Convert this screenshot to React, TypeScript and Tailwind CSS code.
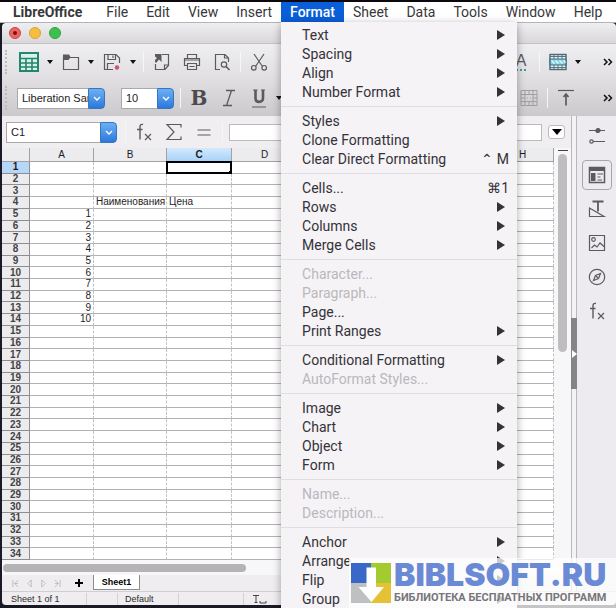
import type { ReactNode } from 'react';

interface MenuEntry {
  label: string;
  submenu?: boolean;
  disabled?: boolean;
  shortcut?: string;
}

const MENUS = ['File', 'Edit', 'View', 'Insert', 'Format', 'Sheet', 'Data', 'Tools', 'Window', 'Help'];

/** Entries of the Format menu, one array per separated group. */
const FORMAT_GROUPS: MenuEntry[][] = [
  [
    { label: 'Text', submenu: true },
    { label: 'Spacing', submenu: true },
    { label: 'Align', submenu: true },
    { label: 'Number Format', submenu: true },
  ],
  [
    { label: 'Styles', submenu: true },
    { label: 'Clone Formatting' },
    { label: 'Clear Direct Formatting', shortcut: '⌃ M' },
  ],
  [
    { label: 'Cells...', shortcut: '⌘1' },
    { label: 'Rows', submenu: true },
    { label: 'Columns', submenu: true },
    { label: 'Merge Cells', submenu: true },
  ],
  [
    { label: 'Character...', disabled: true },
    { label: 'Paragraph...', disabled: true },
    { label: 'Page...' },
    { label: 'Print Ranges', submenu: true },
  ],
  [
    { label: 'Conditional Formatting', submenu: true },
    { label: 'AutoFormat Styles...', disabled: true },
  ],
  [
    { label: 'Image', submenu: true },
    { label: 'Chart', submenu: true },
    { label: 'Object', submenu: true },
    { label: 'Form', submenu: true },
  ],
  [
    { label: 'Name...', disabled: true },
    { label: 'Description...', disabled: true },
  ],
  [
    { label: 'Anchor', submenu: true },
    { label: 'Arrange', submenu: true },
    { label: 'Flip', submenu: true },
    { label: 'Group', submenu: true },
  ],
];

const COLUMNS = [
  { name: 'A', width: 'w-16' },
  { name: 'B', width: 'w-[73px]' },
  { name: 'C', width: 'w-[65px]' },
  { name: 'D', width: 'w-[66px]' },
  { name: 'E', width: 'w-[65px]' },
  { name: 'F', width: 'w-16' },
  { name: 'G', width: 'w-[65px]' },
  { name: 'H', width: 'w-[62px]' },
];

const ROWS = Array.from({ length: 34 }, (_, i) => i + 1);

function cellValue(column: string, row: number): string {
  if (column === 'A' && row >= 5 && row <= 14) return String(row - 4);
  if (column === 'B' && row === 4) return 'Наименования';
  if (column === 'C' && row === 4) return 'Цена';
  return '';
}

/* ---------- icons ---------- */

function Icon({ children, className = 'size-5' }: { children: ReactNode; className?: string }) {
  return (
    <svg viewBox="0 0 20 20" fill="none" stroke="#5c5a5e" strokeWidth="1.2" className={className} aria-hidden="true">
      {children}
    </svg>
  );
}

const SpreadsheetIcon = () => (
  <Icon>
    <rect x="1" y="1" width="18" height="18" fill="#d9f3ea" stroke="#23866d" strokeWidth="2" />
    <path d="M1 6.5h18M7 6.5V19M13 6.5V19M1 11h18M1 15h18" stroke="#23866d" strokeWidth="1.6" />
  </Icon>
);

const FolderIcon = () => (
  <Icon>
    <path d="M2.5 5.5h15v12h-15z" />
    <path d="M2 8V2.5h6L9.5 5h8v1H9L7.5 8z" fill="#5c5a5e" stroke="none" />
  </Icon>
);

const SaveIcon = () => (
  <Icon>
    <path d="M11 17.5H2.5v-15H14L17.5 6v5" />
    <path d="M6 2.5V7.5h7.5v-5M11 3.5v2.5M5.5 17.5v-6H12" />
    <circle cx="15" cy="15.5" r="2.2" fill="#c9566d" stroke="none" />
  </Icon>
);

const ExportIcon = () => (
  <Icon>
    <path d="M10 2.5h6.5v11l-3.5 4H3.5V12M12.5 17v-4h4" />
    <path d="M3 2h6.5v8L7 7.5 4.5 10.5H3V8l2-2-2-1.5z" fill="#5c5a5e" stroke="none" />
  </Icon>
);

const PrintIcon = () => (
  <Icon>
    <path d="M5.5 6.5V2.5h9v4M5.5 13.5h-3v-7h15v7h-3" />
    <path d="M3 8h14M5 11.5h10M5.5 12v5.5h9V12M7.5 14.5h5" />
  </Icon>
);

const PreviewIcon = () => (
  <Icon>
    <path d="M8 17.5H3.5v-15H13L16.5 6v4M12.5 2.5V6h4" />
    <circle cx="12" cy="12.5" r="2.7" />
    <path d="m14 14.5 3.5 3.5" strokeWidth="1.6" />
  </Icon>
);

const CutIcon = () => (
  <Icon>
    <path d="m5 2 8.5 12.5M15 2 6.5 14.5" />
    <circle cx="4.8" cy="15.8" r="2.3" />
    <circle cx="15.2" cy="15.8" r="2.3" />
  </Icon>
);

const TableIcon = () => (
  <Icon>
    <rect x="2" y="2.5" width="16" height="15" fill="#eaf2f4" stroke="#4a6a76" strokeWidth="1.4" />
    <path d="M2 7h16v6H2z" fill="#7fd0e4" stroke="#4a6a76" />
    <path d="M6 2v5M6 13v5M10 2v5M10 13v5M14 2v5M14 13v5M2 4.5h16M2 15.5h16" stroke="#4a6a76" strokeWidth="0.9" />
    <path d="m3.5 8.5 3 3m1-3 3 3m1-3 3 3m1-3 2 2" stroke="#eafaff" strokeWidth="1.4" />
  </Icon>
);

const BordersIcon = () => (
  <Icon>
    <path
      d="M2 2.5h16v15H2zM6 2.5v15M10 2.5v4M10 13.5v4M14 2.5v15M2 6.5h16M2 13.5h16M2 10h4M14 10h4M8 10h1M11 10h1"
      stroke="#a19fa3"
      strokeWidth="1"
    />
  </Icon>
);

const AlignTopIcon = () => (
  <Icon>
    <path d="M2 2.5h16" />
    <path d="M10 17.5V6M7.5 9 10 6l2.5 3" strokeWidth="1.7" />
  </Icon>
);

const SumIcon = () => (
  <Icon>
    <path d="M17 5.5V2.5H3l7 7.5-7 7.5h14v-3" />
  </Icon>
);

const EqualsIcon = () => (
  <Icon>
    <path d="M3.5 8h13M3.5 13h13" />
  </Icon>
);

const FunctionIcon = () => (
  <Icon>
    <path d="M9 2.5C6.5 1.8 6 3.5 6 5v12.5M3 7.5h5.5" strokeWidth="1.4" />
    <path d="m11 12 6 6M17 12l-6 6" />
  </Icon>
);

const SettingsIcon = () => (
  <Icon>
    <path d="M2 4.5h16M6 15.5h12" />
    <circle cx="11" cy="4.5" r="2" fill="#5c5a5e" />
    <circle cx="4.5" cy="15.5" r="1.7" />
  </Icon>
);

const PropertiesIcon = () => (
  <Icon>
    <path d="M2.5 2.5h15v15h-15z" strokeWidth="1.5" />
    <path d="M2 2h16v4H2zM4 8h4.5v8H4z" fill="#5c5a5e" stroke="none" />
    <path d="M10.5 9H16M10.5 12h3M10.5 15H15" />
  </Icon>
);

const StylesIcon = () => (
  <Icon>
    <path d="M5.500 2.500h11M11 2.500v10" strokeWidth="1.8" />
    <path d="M2.5 9v8.500H17z" />
  </Icon>
);

const GalleryIcon = () => (
  <Icon>
    <path d="M2.5 2.5h15v15h-15z" />
    <circle cx="6.5" cy="6.5" r="1.8" />
    <path d="m4.5 15 3-3 2.5 2 3-4 4 3.5" />
  </Icon>
);

const NavigatorIcon = () => (
  <Icon>
    <circle cx="10" cy="10" r="7.7" />
    <path d="m13.5 6.5-2 5-5 2 2-5z" />
    <path d="m9 9 2 2" />
  </Icon>
);

function Caret() {
  return (
    <svg viewBox="0 0 6 4" className="h-1 w-1.5 shrink-0" aria-hidden="true">
      <path d="M0 0h6L3 4z" fill="#111" />
    </svg>
  );
}

function MoreIcon() {
  return (
    <svg viewBox="0 0 10 8" className="h-2 w-2.5" fill="none" stroke="#111" strokeWidth="1.5" aria-hidden="true">
      <path d="m1 1 3 3-3 3M5.5 1l3 3-3 3" />
    </svg>
  );
}

/* ---------- controls ---------- */

function ToolButton({ label, children, className = '' }: { label: string; children: ReactNode; className?: string }) {
  return (
    <button type="button" aria-label={label} className={`flex h-6 shrink-0 items-center justify-center ${className}`}>
      {children}
    </button>
  );
}

function Divider() {
  return <span className="h-5 w-px shrink-0 bg-[#f6f5f7]" />;
}

function Grip() {
  return <span className="h-6 w-0 shrink-0 border-l-2 border-dotted border-[#bdbbbe]" />;
}

function ComboBox({ label, value, className }: { label: string; value: string; className: string }) {
  return (
    <div className={`flex h-[21px] shrink-0 ${className}`}>
      <input
        aria-label={label}
        defaultValue={value}
        className="min-w-0 flex-1 border border-r-0 border-[#a9a8ab] bg-white pl-1 text-[11px] text-[#222] outline-none"
      />
      <button
        type="button"
        aria-label={`${label} list`}
        className="flex w-[17px] items-center justify-center rounded-r-[4px] border border-[#3676bd] bg-linear-to-b from-[#6cb0f2] to-[#2b78dd]"
      >
        <svg viewBox="0 0 8 5" className="h-[5px] w-2" fill="none" stroke="#fff" strokeWidth="1.4" aria-hidden="true">
          <path d="m1 1 3 3 3-3" />
        </svg>
      </button>
    </div>
  );
}

function FormatMenu() {
  return (
    <div
      role="menu"
      aria-label="Format"
      className="absolute top-full left-0 z-20 w-[236px] bg-[#f5f3f6] pt-[3px] pb-2 shadow-[0_2px_8px_rgba(0,0,0,0.35)]"
    >
      {FORMAT_GROUPS.map((group, i) => (
        <div key={group[0].label} role="group">
          {i > 0 && <div role="separator" className="mt-[5px] mb-1 h-px bg-[#dfdde1]" />}
          {group.map((entry) => (
            <button
              key={entry.label}
              type="button"
              role="menuitem"
              disabled={entry.disabled}
              className="flex h-[19px] w-full items-center pr-3 pl-[21px] text-left text-[#343236] disabled:text-[#bab8bc]"
            >
              {entry.label}
              {entry.submenu && (
                <svg viewBox="0 0 8 10" className="ml-auto h-2.5 w-2" aria-hidden="true">
                  <path d="M0 0v10l8-5z" fill="#343236" />
                </svg>
              )}
              {entry.shortcut && <span className="ml-auto -mr-1">{entry.shortcut}</span>}
            </button>
          ))}
        </div>
      ))}
    </div>
  );
}

function MenuBar() {
  return (
    <nav className="flex h-[23px] shrink-0 border-t-2 border-b border-t-[#0d0810] border-b-[#b5b3b6] bg-white pl-1 font-[Roboto,sans-serif] text-sm text-[#39373b]">
      <button type="button" className="mr-1.5 px-[9px] font-bold">
        LibreOffice
      </button>
      {MENUS.map((name) => (
        <div key={name} className="relative flex">
          <button
            type="button"
            aria-expanded={name === 'Format'}
            className="px-[9px] aria-expanded:bg-[#0a5ed8] aria-expanded:font-medium aria-expanded:text-white"
          >
            {name}
          </button>
          {name === 'Format' && <FormatMenu />}
        </div>
      ))}
    </nav>
  );
}

function TitleBar() {
  return (
    <div className="flex h-[21px] shrink-0 items-center gap-2 rounded-t border-b border-[#c4c2c5] bg-linear-to-b from-[#efeef0] to-[#d9d7da] pl-[7px]">
      <button
        type="button"
        aria-label="Close"
        className="flex size-3 items-center justify-center rounded-full border border-[#c4474b] bg-[#ee6463]"
      >
        <span className="size-1 rounded-full bg-[#7c1015]" />
      </button>
      <button type="button" aria-label="Minimize" className="size-3 rounded-full border border-[#dba03c] bg-[#f6be3f]" />
      <button type="button" aria-label="Zoom" className="size-3 rounded-full border border-[#33a043] bg-[#3cc24c]" />
    </div>
  );
}

function StandardToolbar() {
  return (
    <div className="flex h-9 shrink-0 items-center bg-linear-to-b from-[#efeef0] to-[#e0dee1] pl-[3px]">
      <Grip />
      <ToolButton label="New" className="ml-3 w-5"><SpreadsheetIcon /></ToolButton>
      <ToolButton label="New options" className="w-[22px]"><Caret /></ToolButton>
      <ToolButton label="Open" className="w-5"><FolderIcon /></ToolButton>
      <ToolButton label="Open recent" className="w-5"><Caret /></ToolButton>
      <ToolButton label="Save" className="w-[22px]"><SaveIcon /></ToolButton>
      <ToolButton label="Save options" className="w-5"><Caret /></ToolButton>
      <Divider />
      <ToolButton label="Export as PDF" className="ml-2 w-5"><ExportIcon /></ToolButton>
      <ToolButton label="Print" className="ml-2.5 w-5"><PrintIcon /></ToolButton>
      <ToolButton label="Print preview" className="ml-2.5 w-5"><PreviewIcon /></ToolButton>
      <span className="w-2" />
      <Divider />
      <ToolButton label="Cut" className="ml-2 w-5"><CutIcon /></ToolButton>
      <ToolButton label="Spelling" className="mr-2.5 ml-auto w-4">
        <span className="border-b-2 border-dotted border-[#3f9aa8] text-base leading-4 text-[#5c5a5e]">A</span>
      </ToolButton>
      <Divider />
      <ToolButton label="Table" className="ml-2 w-5"><TableIcon /></ToolButton>
      <ToolButton label="Table options" className="w-5"><Caret /></ToolButton>
      <ToolButton label="More tools" className="ml-3 w-4"><MoreIcon /></ToolButton>
    </div>
  );
}

function FormattingToolbar() {
  return (
    <div className="flex h-9 shrink-0 items-center bg-linear-to-b from-[#e0dee1] to-[#cbc9cc] pl-[3px]">
      <Grip />
      <ComboBox label="Font name" value="Liberation Sans" className="ml-2.5 w-[88px]" />
      <ComboBox label="Font size" value="10" className="ml-4 w-[53px]" />
      <span className="w-1.5" />
      <Divider />
      <ToolButton label="Bold" className="ml-2 w-5">
        <span className="font-['DejaVu_Serif'] text-xl font-bold text-[#4c4a4e]">B</span>
      </ToolButton>
      <ToolButton label="Italic" className="ml-2.5 w-5">
        <Icon><path d="M7 2.5h9M4 17.5h9M12.5 2.5l-5 15" strokeWidth="1.3" /></Icon>
      </ToolButton>
      <ToolButton label="Underline" className="ml-2.5 w-5">
        <Icon>
          <path d="M6.500 2v8.500c0 4.500 7.500 4.500 7.500 0V2" strokeWidth="2.6" />
          <path d="M4 2h4.500M12 2h4M3 19h14" />
        </Icon>
      </ToolButton>
      <ToolButton label="Underline options" className="w-5"><Caret /></ToolButton>
      <ToolButton label="Borders" className="mr-2 ml-auto w-5"><BordersIcon /></ToolButton>
      <Divider />
      <ToolButton label="Align top" className="ml-2 w-5"><AlignTopIcon /></ToolButton>
      <ToolButton label="More formatting" className="ml-6 w-4"><MoreIcon /></ToolButton>
    </div>
  );
}

function FormulaBar() {
  return (
    <div className="flex h-8 shrink-0 items-center bg-[#f0eef1] pr-1.5 pl-1">
      <ComboBox label="Name box" value="C1" className="w-[111px]" />
      <span className="w-2" />
      <Divider />
      <ToolButton label="Function wizard" className="ml-2 w-5"><FunctionIcon /></ToolButton>
      <ToolButton label="Sum" className="ml-2.5 w-5"><SumIcon /></ToolButton>
      <ToolButton label="Accept" className="ml-2.5 w-5"><EqualsIcon /></ToolButton>
      <span className="w-2" />
      <Divider />
      <input aria-label="Formula" className="ml-1.5 h-[17px] min-w-0 flex-1 border border-[#bcbabd] bg-white" />
      <button
        type="button"
        aria-label="Expand formula bar"
        className="ml-1.5 flex h-3.5 w-[17px] items-center justify-center rounded-[3px] border border-[#bcbabd] bg-white"
      >
        <svg viewBox="0 0 10 6" className="h-1.5 w-2.5" aria-hidden="true">
          <path d="M0 0h10L5 6z" fill="#000" />
        </svg>
      </button>
    </div>
  );
}

function Sheet() {
  return (
    <table className="shrink-0 table-fixed border-separate border-spacing-0 self-stretch text-[10px] leading-[10px] text-[#1d1c1e]">
      <thead>
        <tr className="h-3.5">
          <th className="w-7 border-r border-b border-[#a3a1a4] bg-[#ececee] p-0" />
          {COLUMNS.map(({ name, width }) => (
            <th
              key={name}
              scope="col"
              className={`${width} border-r border-b border-[#a3a1a4] p-0 ${
                name === 'C' ? 'bg-linear-to-b from-[#d3e9fc] to-[#a9d2f8] font-bold' : 'bg-[#ececee] font-normal'
              }`}
            >
              {name}
            </th>
          ))}
        </tr>
      </thead>
      <tbody>
        {ROWS.map((row) => (
          <tr key={row}>
            <th
              scope="row"
              className={`border-r border-b border-[#8f8d90] p-0 font-bold ${row === 1 ? 'bg-[#b5d8f8]' : 'bg-[#ececee] text-[#444246]'}`}
            >
              {row}
            </th>
            {COLUMNS.map(({ name }) => (
              <td
                key={name}
                className={`relative border-r border-b border-r-[#c4c2c5] border-b-[#b3b1b4] [border-right-style:dashed] bg-white p-0 whitespace-nowrap ${
                  name === 'A' ? 'pr-0.5 text-right' : 'pl-0.5'
                }`}
              >
                {cellValue(name, row)}
                {name === 'C' && row === 1 && (
                  <span className="absolute -inset-px border-2 border-black">
                    <span className="absolute -right-[3px] -bottom-[3px] size-1 bg-black" />
                  </span>
                )}
              </td>
            ))}
          </tr>
        ))}
      </tbody>
    </table>
  );
}

function SheetTabs() {
  return (
    <div className="flex h-4 shrink-0 items-start bg-[#efedf0] pl-2.5">
      <div className="flex h-4 items-center gap-[7px]">
        {[
          { label: 'First sheet', d: 'M1 0v8M7 0 3 4l4 4M3 4h4' },
          { label: 'Previous sheet', d: 'M6 0 2 4l4 4z' },
          { label: 'Next sheet', d: 'm2 0 4 4-4 4z' },
          { label: 'Last sheet', d: 'M7 0v8M1 0l4 4-4 4M1 4h4' },
        ].map(({ label, d }) => (
          <button key={label} type="button" aria-label={label}>
            <svg viewBox="0 0 8 8" className="size-[7px]" fill="none" stroke="#b9b7ba" aria-hidden="true">
              <path d={d} />
            </svg>
          </button>
        ))}
      </div>
      <button type="button" aria-label="Add sheet" className="ml-3.5 flex h-4 items-center">
        <svg viewBox="0 0 8 8" className="size-2" stroke="#000" strokeWidth="2" aria-hidden="true">
          <path d="M4 0v8M0 4h8" />
        </svg>
      </button>
      <button
        type="button"
        className="ml-2.5 h-[15px] w-[47px] border border-t-0 border-[#8d8b8e] bg-white text-[9px] leading-[13px] font-bold text-black"
      >
        Sheet1
      </button>
    </div>
  );
}

function StatusBar() {
  return (
    <footer className="flex h-3.5 shrink-0 items-center rounded-b border-t border-[#d0ced1] bg-[#efedf0] pl-[9px] text-[9px] leading-3 text-[#2b2a2c]">
      <span className="w-[75px]">Sheet 1 of 1</span>
      <span className="h-3 w-8 border-x border-[#d3d1d4]" />
      <span className="w-[60px] pl-[7px]">Default</span>
      <span className="h-3 w-[66px] border-x border-[#d3d1d4]" />
      <svg viewBox="0 0 16 10" className="ml-2 h-2.5 w-4" fill="none" stroke="#444" aria-hidden="true">
        <path d="M1 1.5h6M4 1.5v7M2.5 8.5h3M8 7v2h6V7" />
      </svg>
    </footer>
  );
}

function Sidebar() {
  return (
    <aside className="flex w-[39px] shrink-0 flex-col items-center bg-[#edebef] pt-2">
      <ToolButton label="Sidebar settings" className="w-[30px]"><SettingsIcon /></ToolButton>
      <button
        type="button"
        aria-label="Properties"
        className="mt-3 flex h-[30px] w-[30px] items-center justify-center rounded-[4px] border border-[#a8a6a9]"
      >
        <PropertiesIcon />
      </button>
      <div className="mt-[7px] flex flex-col gap-2.5">
        <ToolButton label="Styles" className="w-[30px]"><StylesIcon /></ToolButton>
        <ToolButton label="Gallery" className="w-[30px]"><GalleryIcon /></ToolButton>
        <ToolButton label="Navigator" className="w-[30px]"><NavigatorIcon /></ToolButton>
        <ToolButton label="Functions" className="w-[30px]"><FunctionIcon /></ToolButton>
      </div>
    </aside>
  );
}

function Watermark() {
  return (
    <div className="absolute right-0 bottom-0 z-30 flex h-[50px] w-[267px] items-center gap-[3px] bg-white/75 pl-0.5">
      <svg viewBox="0 0 40 40" className="size-10 shrink-0" aria-hidden="true">
        <path d="M0 0h20v20H0z" fill="#3968c8" />
        <path d="M20 0h20v20H20z" fill="#a3ca2e" />
        <path d="M0 20h20v20H0z" fill="#bfc0c2" />
        <path d="M20 20h20v20H20z" fill="#e4c233" />
        <path d="M15.5 4.5H25V24h8L20.5 39 7.5 24h8z" fill="#fff" />
      </svg>
      <div className="whitespace-nowrap">
        <div className="font-[Inter,sans-serif] text-[32px] leading-[30px] font-black text-[#6b8ad5]">BIBLSOFT.RU</div>
        <div className="font-[Roboto,sans-serif] text-[11px] leading-4 font-bold text-[#77757a]">
          БИБЛИОТЕКА БЕСПЛАТНЫХ ПРОГРАММ
        </div>
      </div>
    </div>
  );
}

export default function App() {
  return (
    <div className="relative flex h-screen flex-col overflow-hidden bg-[#1a1a26]">
      <MenuBar />
      <main className="ml-0.5 flex min-h-0 flex-1 flex-col pb-[3px] font-['Liberation_Sans',sans-serif]">
        <TitleBar />
        <StandardToolbar />
        <FormattingToolbar />
        <div className="flex min-h-0 flex-1">
          <div className="flex min-w-0 flex-1 flex-col">
            <FormulaBar />
            <div className="flex min-h-0 flex-1 bg-[#f7f6f8]">
              <Sheet />
              <div className="flex flex-1 flex-col items-center gap-[3px] pt-0.5">
                <span className="h-px w-2.5 bg-[#444]" />
                <span className="h-[198px] w-[9px] rounded-full bg-[#bfbdc0]" />
              </div>
            </div>
            <div className="flex h-[15px] shrink-0 items-center bg-[#f7f6f8] pl-px">
              <span className="h-2 w-[243px] rounded-full bg-[#b5b3b6]" />
            </div>
            <SheetTabs />
          </div>
          <div className="flex w-1.5 shrink-0 flex-col border-x border-[#b9b7ba] bg-[#f3f2f4] pt-[202px]">
            <button
              type="button"
              aria-label="Hide sidebar"
              className="-mx-px flex h-[71px] items-center justify-center bg-[#858386]"
            >
              <svg viewBox="0 0 5 8" className="h-2 w-[5px]" aria-hidden="true">
                <path d="M0 0v8l5-4z" fill="#fff" />
              </svg>
            </button>
          </div>
          <Sidebar />
        </div>
        <StatusBar />
      </main>
      <Watermark />
    </div>
  );
}
